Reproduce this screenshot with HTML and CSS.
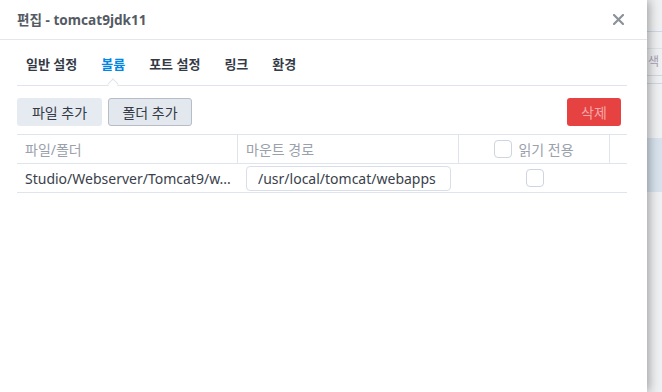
FILE: index.html
```html
<!DOCTYPE html>
<html lang="ko">
  <head>
    <meta charset="UTF-8" />
    <title>편집 - tomcat9jdk11</title>
    <link rel="stylesheet" href="styles.css">
  </head>
  <body>
    <div class="dialog">
      <div class="dialog-header">
        <h1>편집 - tomcat9jdk11</h1>
        <button class="close-btn" aria-label="닫기">
          <svg width="11" height="11" viewBox="0 0 11 11">
            <path d="M1 1 L10 10 M10 1 L1 10" stroke="currentColor" stroke-width="2.2" stroke-linecap="round" />
          </svg>
        </button>
      </div>

      <div class="dialog-body">
        <nav class="tabs">
          <span class="tab">일반 설정</span>
          <span class="tab active">볼륨</span>
          <span class="tab">포트 설정</span>
          <span class="tab">링크</span>
          <span class="tab">환경</span>
        </nav>

        <div class="toolbar">
          <button class="btn">파일 추가</button>
          <button class="btn focused">폴더 추가</button>
          <button class="btn danger">삭제</button>
        </div>

        <div class="grid">
          <div class="grid-row head">
            <div class="cell">파일/폴더</div>
            <div class="cell">마운트 경로</div>
            <div class="cell center">
              <span class="checkbox"></span>
              <span>읽기 전용</span>
            </div>
            <div class="cell"></div>
          </div>
          <div class="grid-row">
            <div class="cell text">Studio/Webserver/Tomcat9/w...</div>
            <div class="cell">
              <input class="field" type="text" value="/usr/local/tomcat/webapps" />
            </div>
            <div class="cell center">
              <span class="checkbox"></span>
            </div>
            <div class="cell"></div>
          </div>
        </div>
      </div>
    </div>

    <!-- page behind the dialog -->
    <div class="backdrop">
      <div class="bd-line"></div>
      <div class="bd-search">색</div>
      <div class="bd-line"></div>
      <div class="bd-line gap"></div>
      <div class="bd-selected"></div>
    </div>
  </body>
</html>
```

FILE: styles.css
```css
:root {
  --text: #333a45;
  --muted: #9aa1ab;
  --border: #dfe5ec;
  --primary: #0086e5;
  --danger: #e64242;
}

* {
  margin: 0;
  padding: 0;
  box-sizing: border-box;
  font-family: "Noto Sans", "Noto Sans CJK KR", sans-serif;
}

body {
  width: 662px;
  height: 392px;
  overflow: hidden;
  display: flex;
  background-color: #eceef1;
  color: var(--text);
}

.dialog {
  position: relative;
  z-index: 1;
  width: 647px;
  flex-shrink: 0;
  height: 392px;
  background-color: white;
  box-shadow: 2px 0 10px rgba(0, 0, 0, 0.35);
}

.dialog-header {
  height: 40px;
  display: flex;
  align-items: center;
  justify-content: space-between;
  padding: 0 23px 0 17px;
  border-bottom: 1px solid #e3e7ec;
}

h1 {
  font-size: 13.6px;
  font-weight: 700;
  color: #555b64;
  margin-top: -2px;
}

.close-btn {
  background: none;
  border: none;
  color: #8c929b;
  display: flex;
  margin-top: -1px;
}

.dialog-body {
  padding: 0 20px 0 17px;
}

.tabs {
  display: flex;
  gap: 24px;
  height: 46px;
  align-items: center;
  padding: 2px 0 0 9px;
  border-bottom: 1px solid var(--border);
  position: relative;
}

.tab {
  font-size: 13px;
  font-weight: 600;
  color: #333a45;
}

.tab.active {
  color: var(--primary);
  position: relative;
}

.tab.active::after {
  content: "";
  position: absolute;
  left: 50%;
  bottom: -15px;
  width: 7px;
  height: 7px;
  margin-left: -4px;
  background-color: white;
  border-left: 1px solid var(--border);
  border-top: 1px solid var(--border);
  transform: rotate(45deg);
}

.toolbar {
  display: flex;
  gap: 6px;
  padding: 12px 6px 8px 0;
}

.btn {
  height: 28px;
  width: 85px;
  border: 1px solid transparent;
  border-radius: 3px;
  background-color: #e6ebf2;
  color: var(--text);
  font-size: 14px;
  cursor: pointer;
}

.btn.focused {
  width: 84px;
  border-color: #b5bdc8;
  background-color: #e3e8ef;
}

.btn.danger {
  width: 54px;
  margin-left: auto;
  background-color: var(--danger);
  color: #f5a7a7;
}

.grid {
  border-top: 1px solid var(--border);
}

.grid-row {
  display: grid;
  grid-template-columns: 221px 221px 151px 1fr;
  height: 29px;
  border-bottom: 1px solid var(--border);
}

.grid-row.head .cell {
  color: var(--muted);
  border-right: 1px solid var(--border);
}

.grid-row.head .cell:last-child {
  border-right: none;
}

.cell {
  display: flex;
  align-items: center;
  gap: 6px;
  padding: 0 8px;
  font-size: 14px;
  white-space: nowrap;
  overflow: hidden;
}

.cell.center {
  justify-content: center;
}

.cell.text {
  color: #3a414b;
}

.checkbox {
  width: 18px;
  height: 18px;
  border: 1px solid #cdd5df;
  border-radius: 4px;
  background-color: white;
  flex-shrink: 0;
}

.field {
  width: 205px;
  height: 25px;
  padding: 0 11px;
  border: 1px solid #d8dfe8;
  border-radius: 4px;
  font-size: 14px;
  color: #3a414b;
  outline: none;
}

.backdrop {
  flex: 1;
  background-color: #eef0f2;
  padding-top: 31px;
}

.bd-line {
  height: 1px;
  background-color: #cfd8e2;
}

.bd-line.gap {
  margin-top: 7px;
}

.bd-search {
  height: 27px;
  margin-top: 16px;
  padding: 3px 0 0 1px;
  font-size: 12px;
  line-height: 20px;
  color: #a9a1b5;
  border-top: 1px solid #dde3ea;
  overflow: hidden;
}

.bd-selected {
  margin-top: 54px;
  height: 54px;
  background-color: #d7e2ed;
}
```
